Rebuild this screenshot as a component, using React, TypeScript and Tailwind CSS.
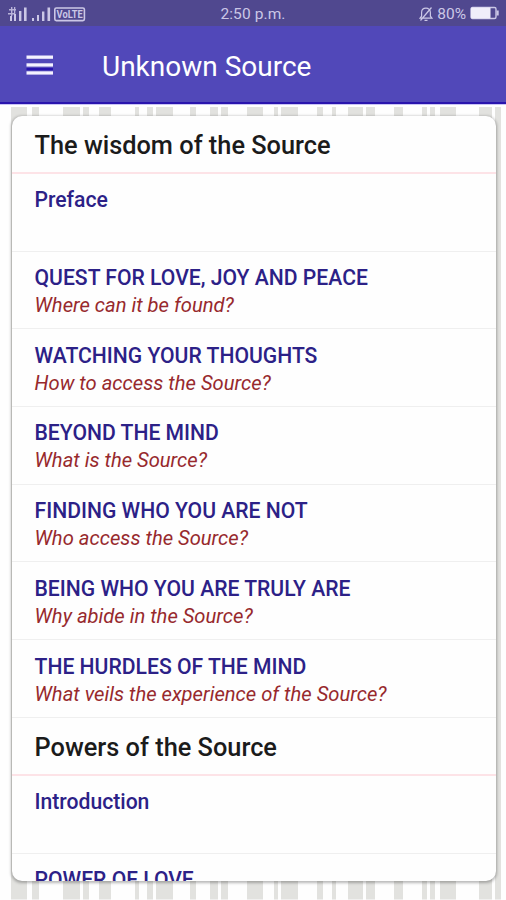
type Entry = { title: string; subtitle?: string };

const wisdom: Entry[] = [
  { title: "Preface" },
  { title: "QUEST FOR LOVE, JOY AND PEACE", subtitle: "Where can it be found?" },
  { title: "WATCHING YOUR THOUGHTS", subtitle: "How to access the Source?" },
  { title: "BEYOND THE MIND", subtitle: "What is the Source?" },
  { title: "FINDING WHO YOU ARE NOT", subtitle: "Who access the Source?" },
  { title: "BEING WHO YOU ARE TRULY ARE", subtitle: "Why abide in the Source?" },
  { title: "THE HURDLES OF THE MIND", subtitle: "What veils the experience of the Source?" },
];

const powers: Entry[] = [{ title: "Introduction" }, { title: "POWER OF LOVE" }];

// [left, width] of each bar of the striped backdrop
const stripes: [number, number][] = [
  [11, 16], [32, 7], [63, 17], [83, 6], [99, 12], [135, 4], [147, 6], [156, 17],
  [190, 6], [210, 8], [221, 7], [247, 16], [274, 4], [281, 17], [317, 6], [332, 4],
  [348, 15], [366, 9], [394, 9], [422, 5], [430, 5], [440, 16], [479, 13], [495, 6],
];

function Stripes() {
  return (
    <svg className="absolute inset-0" width="506" height="796">
      {stripes.map(([x, w]) => (
        <rect key={x} x={x} y="2" width={w} height="792.5" fill="#e2e2df" />
      ))}
    </svg>
  );
}

function SignalIcons() {
  return (
    <svg width="80" height="26" viewBox="0 0 80 26" fill="#cbc7e6">
      <path d="M1 8h7v1.6H1zM0 12h7v1.4H0zM3 6h1.4v9H3zM6 6h1.3v7H6z" opacity=".85" />
      <rect x="2" y="15" width="2" height="5" />
      <rect x="6" y="13" width="2" height="7" />
      <rect x="11" y="10" width="2.4" height="10" />
      <rect x="16" y="6.5" width="2.6" height="13.5" />
      <rect x="24" y="17" width="2" height="3" />
      <rect x="29" y="14" width="2" height="6" />
      <rect x="34" y="10.5" width="2.4" height="9.5" />
      <rect x="39.5" y="6.5" width="2.6" height="13.5" />
      <rect x="46.8" y="7" width="29.6" height="12.6" rx="1.5" fill="none" stroke="#cbc7e6" strokeWidth="1.6" />
      <text x="61.6" y="17.4" textAnchor="middle" textLength="26" lengthAdjust="spacingAndGlyphs" fontFamily="Roboto, sans-serif" fontSize="11.5" fontWeight="700">VoLTE</text>
    </svg>
  );
}

function StatusBar() {
  return (
    <div className="grid h-[26px] grid-cols-[1fr_auto_1fr] items-center bg-[#50488f] text-[#cbc7e6]">
      <div className="pl-2"><SignalIcons /></div>
      <span className="pt-px text-[15.5px] leading-[26px] tracking-[0.1px]">2:50 p.m.</span>
      <div className="flex items-center justify-end pr-1.5">
        <svg width="14" height="16" viewBox="0 0 14 16" fill="none" stroke="#cbc7e6" strokeWidth="1.2">
          <path d="M1 12.2h12l-1.6-2V6.4C11.4 3.8 9.6 2.2 7 2.2S2.6 3.8 2.6 6.4v3.8zM5.5 14.3h3M1.5 14.5l11-13" />
        </svg>
        <span className="ml-1 text-[15.5px] leading-[26px]">80%</span>
        <svg className="ml-1 -mt-px" width="30" height="14" viewBox="0 0 30 14">
          <rect x="1" y="1.5" width="25" height="11" rx="1.5" fill="none" stroke="#cbc7e6" strokeWidth="1.4" />
          <rect x="1" y="1.5" width="19.5" height="11" rx="1" fill="#f0eefa" />
          <rect x="26.5" y="4.5" width="2.2" height="5" fill="#cbc7e6" />
        </svg>
      </div>
    </div>
  );
}

function SectionTitle({ children }: { children: string }) {
  return (
    <h2 className="h-[58px] border-b-2 border-[#fde3e7] pl-[22.5px] text-[25.35px] leading-[59px] font-medium text-[#1b1b1b]">
      {children}
    </h2>
  );
}

function Row({ title, subtitle }: Entry) {
  return (
    <li className="h-[77.7px] border-b border-[#efefef] pt-[12.4px] pl-[22.5px] whitespace-nowrap">
      <p className="text-[21.15px] leading-[28px] font-medium text-[#2c2187]">{title}</p>
      {subtitle && <p className="text-[20.2px] leading-[26px] text-[#97292d] italic">{subtitle}</p>}
    </li>
  );
}

export default function App() {
  return (
    <div className="flex h-[900px] w-[506px] flex-col overflow-hidden bg-[#fefefe] font-[Roboto,sans-serif]">
      <StatusBar />
      <header className="flex h-[78px] items-center border-b-2 border-[#2914ad] bg-[#5148b9] pl-[26px] text-white">
        <svg className="mt-1" width="28" height="22" viewBox="0 0 28 22" fill="#f4f2ff">
          <rect x="0.5" y="0.5" width="26.5" height="3.3" />
          <rect x="0.5" y="8.3" width="26.5" height="3.3" />
          <rect x="0.5" y="13" width="26.5" height="2.2" fill="#2914ad" />
          <rect x="0.5" y="16.3" width="26.5" height="3.3" />
        </svg>
        <h1 className="ml-[48px] pt-[5px] text-[28px] leading-none">Unknown Source</h1>
      </header>
      <main className="relative h-[796px] border-t border-[#c9c4f5] px-3 pt-[11px]">
        <Stripes />
        <section className="relative h-[765px] w-[483.5px] overflow-hidden rounded-[10px] bg-[#fefefe] shadow-[0_1px_3px_1px_rgba(0,0,0,0.28)]">
          <SectionTitle>The wisdom of the Source</SectionTitle>
          <ul>{wisdom.map((e) => <Row key={e.title} {...e} />)}</ul>
          <SectionTitle>Powers of the Source</SectionTitle>
          <ul>{powers.map((e) => <Row key={e.title} {...e} />)}</ul>
        </section>
      </main>
    </div>
  );
}
